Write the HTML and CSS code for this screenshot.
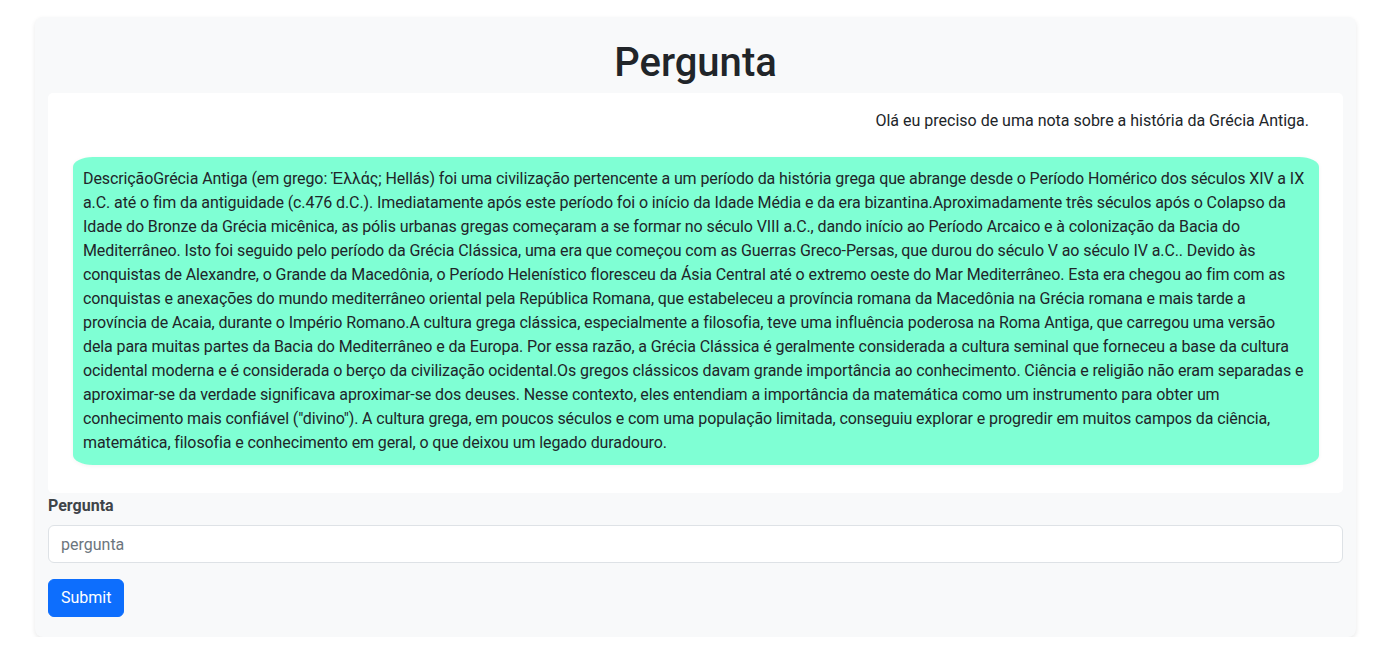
FILE: index.html
```html
<!DOCTYPE html>
<html lang="pt">
<head>
<meta charset="utf-8">
<title>Pergunta</title>
<link rel="stylesheet" href="styles.css">
</head>
<body>
<main class="card">
  <h1 class="title">Pergunta</h1>
  <section class="chat">
    <div class="msg msg-user">Olá eu preciso de uma nota sobre a história da Grécia Antiga.</div>
    <div class="msg msg-bot">DescriçãoGrécia Antiga (em grego: Ἑλλάς; Hellás) foi uma civilização pertencente a um período da história grega que abrange desde o Período Homérico dos séculos XIV a IX<br>a.C. até o fim da antiguidade (c.476 d.C.). Imediatamente após este período foi o início da Idade Média e da era bizantina.Aproximadamente três séculos após o Colapso da<br>Idade do Bronze da Grécia micênica, as pólis urbanas gregas começaram a se formar no século VIII a.C., dando início ao Período Arcaico e à colonização da Bacia do<br>Mediterrâneo. Isto foi seguido pelo período da Grécia Clássica, uma era que começou com as Guerras Greco-Persas, que durou do século V ao século IV a.C.. Devido às<br>conquistas de Alexandre, o Grande da Macedônia, o Período Helenístico floresceu da Ásia Central até o extremo oeste do Mar Mediterrâneo. Esta era chegou ao fim com as<br>conquistas e anexações do mundo mediterrâneo oriental pela República Romana, que estabeleceu a província romana da Macedônia na Grécia romana e mais tarde a<br>província de Acaia, durante o Império Romano.A cultura grega clássica, especialmente a filosofia, teve uma influência poderosa na Roma Antiga, que carregou uma versão<br>dela para muitas partes da Bacia do Mediterrâneo e da Europa. Por essa razão, a Grécia Clássica é geralmente considerada a cultura seminal que forneceu a base da cultura<br>ocidental moderna e é considerada o berço da civilização ocidental.Os gregos clássicos davam grande importância ao conhecimento. Ciência e religião não eram separadas e<br>aproximar-se da verdade significava aproximar-se dos deuses. Nesse contexto, eles entendiam a importância da matemática como um instrumento para obter um<br>conhecimento mais confiável ("divino"). A cultura grega, em poucos séculos e com uma população limitada, conseguiu explorar e progredir em muitos campos da ciência,<br>matemática, filosofia e conhecimento em geral, o que deixou um legado duradouro.</div>
  </section>
  <form class="ask">
    <label class="label" for="pergunta">Pergunta</label>
    <input class="input" id="pergunta" type="text" placeholder="pergunta">
    <button class="btn" type="button">Submit</button>
  </form>
</main>
</body>
</html>
```
FILE: styles.css
```css
* { box-sizing: border-box; }
html, body { margin: 0; background: #fff; }
body {
  font-family: Roboto, "Liberation Sans", sans-serif;
  font-size: 16px;
  line-height: 24px;
  color: #212529;
  padding: 17px 0 0 35px;
}
.card {
  width: 1321px;
  background: #f8f9fa;
  border-radius: 8px;
  box-shadow: 0 2px 5px rgba(0,0,0,0.09);
  padding: 13px 13px 20px 13px;
}
.title {
  margin: 9px 0 6px;
  font-size: 40px;
  line-height: 48px;
  font-weight: 500;
  text-align: center;
  color: #212529;
}
.chat {
  background: #fff;
  border-radius: 5px;
  padding: 16px 24px 28px 25px;
  display: flex;
  flex-direction: column;
  gap: 24px;
}
.msg-user {
  text-align: right;
  padding: 0 10px;
}
.msg-bot {
  background: #7fffd4;
  border-radius: 20px / 10px;
  padding: 10px;
  letter-spacing: -0.1px;
  white-space: nowrap;
  box-shadow: 0 1px 4px rgba(0,0,0,0.05);
}
.ask {
  display: flex;
  flex-direction: column;
  align-items: flex-start;
  margin: 0;
}
.label {
  font-weight: 700;
  color: #3f4449;
  margin: 1px 0 7px;
}
.input {
  width: 100%;
  height: 38px;
  padding: 6px 12px;
  font: inherit;
  color: #212529;
  background: #fff;
  border: 1px solid #dee2e6;
  border-radius: 6px;
}
.input::placeholder { color: #6c757d; }
.btn {
  margin-top: 16px;
  height: 38px;
  padding: 6px 12px;
  font: inherit;
  color: #fff;
  background: #0d6efd;
  border: 1px solid #0d6efd;
  border-radius: 6px;
}
```
